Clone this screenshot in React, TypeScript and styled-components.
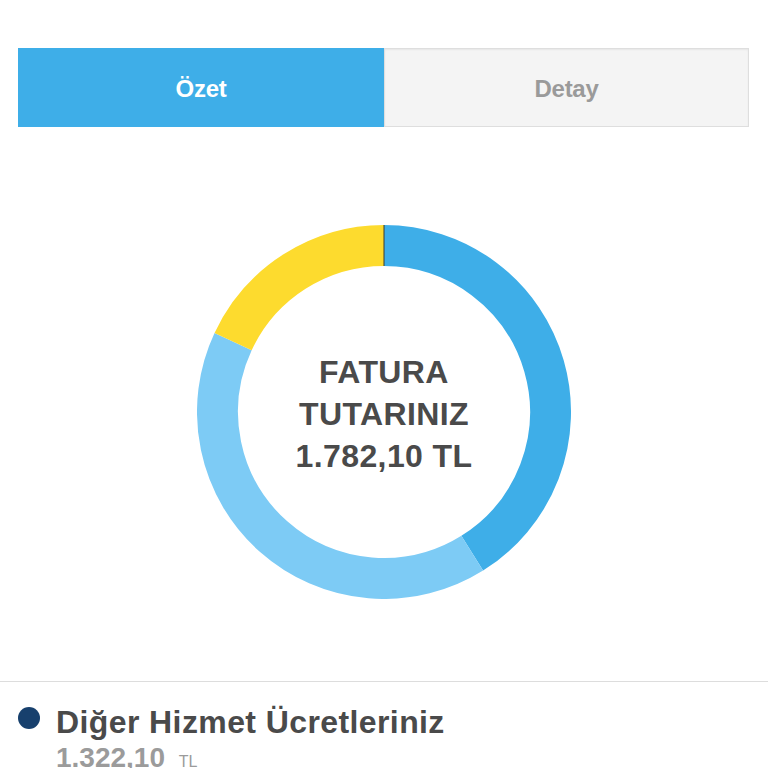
import React from "react";
import styled, { createGlobalStyle } from "styled-components";

const GlobalStyle = createGlobalStyle`
  html, body {
    margin: 0;
    padding: 0;
    background: #ffffff;
    font-family: "Liberation Sans", Arial, sans-serif;
  }
`;

// segment açıları (saat yönünde, tepeden derece)
const segments = [
  { from: 0, to: 148, color: "#3eaee8" },
  { from: 148, to: 295, color: "#7dcbf5" },
  { from: 295, to: 360, color: "#fddb2e" },
];

const SIZE = 374;
const C = SIZE / 2;
const R = 166.5;
const STROKE = 41;

const point = (deg: number) => {
  const rad = (deg * Math.PI) / 180;
  return [C + R * Math.sin(rad), C - R * Math.cos(rad)];
};

const arcPath = (from: number, to: number) => {
  const [x1, y1] = point(from);
  const [x2, y2] = point(to - 0.001);
  const large = to - from > 180 ? 1 : 0;
  return `M ${x1} ${y1} A ${R} ${R} 0 ${large} 1 ${x2} ${y2}`;
};

const App: React.FC = () => {
  return (
    <>
      <GlobalStyle />
      <Page>
        <Tabs>
          <Tab active>Özet</Tab>
          <Tab>Detay</Tab>
        </Tabs>

        <ChartArea>
          <Donut>
            <svg width={SIZE} height={SIZE} viewBox={`0 0 ${SIZE} ${SIZE}`}>
              {segments.map((s) => (
                <path
                  key={s.from}
                  d={arcPath(s.from, s.to)}
                  fill="none"
                  stroke={s.color}
                  strokeWidth={STROKE}
                />
              ))}
              <line
                x1={C}
                y1={0}
                x2={C}
                y2={STROKE}
                stroke="#3a3a2a"
                strokeWidth={1}
              />
            </svg>
            <CenterLabel>
              <span>FATURA</span>
              <span>TUTARINIZ</span>
              <span>1.782,10 TL</span>
            </CenterLabel>
          </Donut>
        </ChartArea>

        <Divider />

        <LegendRow>
          <Dot color="#17406d" />
          <LegendText>
            <LegendTitle>Diğer Hizmet Ücretleriniz</LegendTitle>
            <LegendAmount>
              1.322,10 <small>TL</small>
            </LegendAmount>
          </LegendText>
        </LegendRow>
      </Page>
    </>
  );
};

export default App;

const Page = styled.div`
  width: 768px;
  height: 768px;
  overflow: hidden;
  padding-top: 48px;
  box-sizing: border-box;
`;

const Tabs = styled.div`
  display: grid;
  grid-template-columns: 366px 365px;
  margin-left: 18px;
  height: 79px;
`;

const Tab = styled.div<{ active?: boolean }>`
  display: flex;
  align-items: center;
  justify-content: center;
  padding-top: 2px;
  font-size: 24px;
  font-weight: 700;
  letter-spacing: -0.3px;
  color: ${({ active }) => (active ? "#ffffff" : "#9a9a9a")};
  background: ${({ active }) => (active ? "#3eaee8" : "#f4f4f4")};
  border: ${({ active }) => (active ? "none" : "1px solid #dedede")};
  box-shadow: ${({ active }) =>
    active ? "none" : "inset 0 1px 2px rgba(0, 0, 0, 0.06)"};
  box-sizing: border-box;
`;

const ChartArea = styled.div`
  display: flex;
  justify-content: center;
  padding-top: 98px;
  padding-bottom: 82px;
`;

const Donut = styled.div`
  position: relative;
  width: ${SIZE}px;
  height: ${SIZE}px;

  svg {
    display: block;
  }
`;

const CenterLabel = styled.div`
  position: absolute;
  inset: 0;
  display: flex;
  flex-direction: column;
  align-items: center;
  justify-content: center;
  font-size: 32px;
  line-height: 42px;
  font-weight: 700;
  letter-spacing: 0.4px;
  color: #4a4a4a;
  padding-top: 4px;
  box-sizing: border-box;
`;

const Divider = styled.div`
  height: 1px;
  background: #dddddd;
`;

const LegendRow = styled.div`
  display: flex;
  align-items: flex-start;
  padding: 22px 0 0 18px;
  gap: 16px;
`;

const Dot = styled.div<{ color: string }>`
  width: 22px;
  height: 22px;
  border-radius: 50%;
  background: ${({ color }) => color};
  margin-top: 3px;
  flex-shrink: 0;
`;

const LegendText = styled.div`
  display: flex;
  flex-direction: column;
`;

const LegendTitle = styled.div`
  font-size: 32px;
  line-height: 36px;
  font-weight: 700;
  letter-spacing: 0.4px;
  color: #4a4a4a;
`;

const LegendAmount = styled.div`
  font-size: 28px;
  line-height: 32px;
  margin-top: 2px;
  font-weight: 700;
  color: #9b9b9b;

  small {
    font-size: 16px;
    font-weight: 400;
    margin-left: 6px;
  }
`;
